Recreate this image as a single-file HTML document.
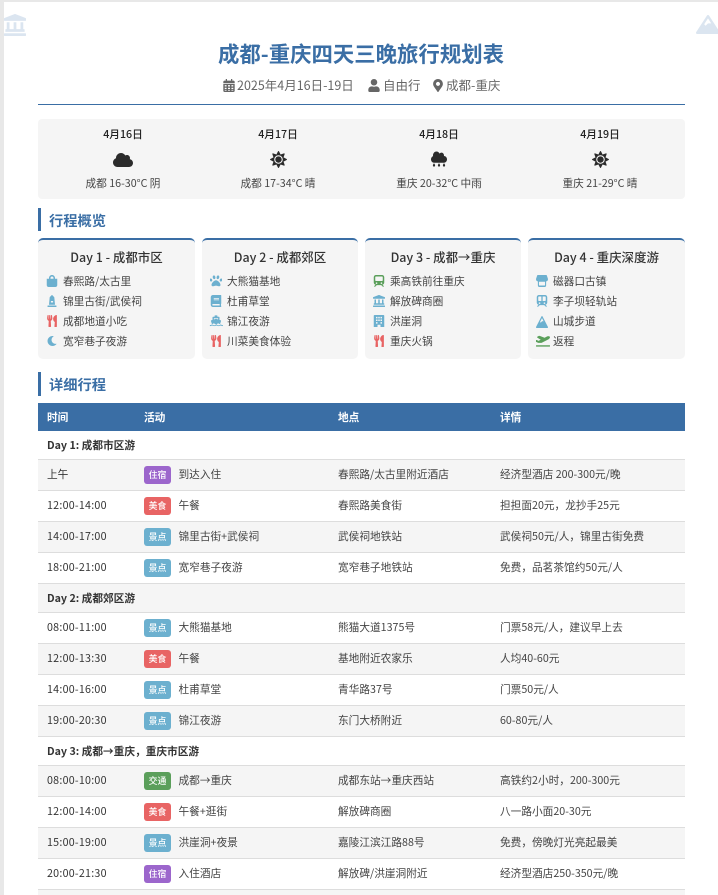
<!DOCTYPE html>
<html lang="zh"><head><meta charset="utf-8"><title>成都-重庆四天三晚旅行规划表</title>
<style>
*{box-sizing:border-box;margin:0;padding:0}
html,body{width:718px;height:895px;overflow:hidden;background:#e8e8e8}
body{font-family:"Noto Sans CJK SC","Liberation Sans",sans-serif;color:#333;position:relative}
#p{position:absolute;left:4px;top:2px;width:714px;height:893px;background:#fff;overflow:hidden}
.a{position:absolute}
svg{display:block;fill:currentColor}
h1{position:absolute;left:0;top:36px;width:714px;text-align:center;font-size:21.4px;line-height:32px;color:#3a6ea5;font-weight:700}
.meta span{position:absolute;top:74px;font-size:12.5px;line-height:18px;color:#666;white-space:nowrap}
.meta svg{position:absolute;color:#666}
.hr{left:34px;top:102px;width:647px;height:1px;background:#3a6ea5}
.wx{left:34px;top:117px;width:647px;height:80px;background:#f5f5f5;border-radius:4px}
.w{position:absolute;width:130px;text-align:center;font-size:10.68px;line-height:16px;white-space:nowrap;color:#333}
.d{top:125px;color:#222;font-weight:500}
.t{top:174px;color:#444}
.sec{left:34px;height:23px;border-left:3px solid #3a6ea5;padding-left:8px;font-size:14.24px;font-weight:700;line-height:25px;color:#3a6ea5}
.c{position:absolute;top:236px;height:121px;background:#f5f5f5;border-radius:5px;border-top:2px solid #3a6ea5}
.c h3{position:absolute;left:0;right:0;top:8px;text-align:center;font-size:12.46px;line-height:18px;font-weight:500;color:#333;white-space:nowrap}
.c div{position:absolute;left:25px;font-size:10.68px;line-height:16px;color:#444;white-space:nowrap}
.c svg{position:absolute;left:8px;width:12px;height:12px}
.b{color:#6cb0cf}.r{color:#e86464}.g{color:#5b9f5b}
.tb{left:34px;top:401px;width:647px}
.tr{position:relative;height:31px;border-bottom:1px solid #ddd;font-size:10.68px;color:#444}
.tr:nth-child(odd){background:#f5f5f5}
.tr span{position:absolute;top:7px;line-height:16px;white-space:nowrap}
.tr .s1{left:9px;color:#333;letter-spacing:.25px}.tr .s2{left:140.5px}.tr .s3{left:300px}.tr .s4{left:462px}
.tr i{position:absolute;left:106px;top:6px;width:27px;height:18px;border-radius:3px;font-style:normal;font-size:8.9px;line-height:18px;text-align:center;color:#fff;font-weight:500}
.th{height:28px;background:#3a6ea5!important;color:#fff;font-weight:700;border:0}
.th span{color:#fff!important;letter-spacing:0!important}
.dy{height:29px;font-weight:700;color:#333}
.dy span{left:9px}
.p{background:#9c66cc}.m{background:#e86464}.j{background:#6cb0cf}.x{background:#5b9f5b}
</style></head><body>
<svg width="0" height="0" style="position:absolute">
<defs>
<symbol id="bank" viewBox="0 0 512 512"><path d="M501.62 92.11L267.24 2.04a31.958 31.958 0 0 0-22.47 0L10.38 92.11A16.001 16.001 0 0 0 0 107.09V144c0 8.84 7.16 16 16 16h480c8.84 0 16-7.16 16-16v-36.91c0-6.67-4.14-12.64-10.38-14.98zM64 192v160H48c-8.84 0-16 7.16-16 16v48h448v-48c0-8.84-7.16-16-16-16h-16V192h-64v160h-96V192h-64v160h-96V192H64zm432 256H16c-8.84 0-16 7.16-16 16v32c0 8.84 7.16 16 16 16h480c8.84 0 16-7.16 16-16v-32c0-8.84-7.16-16-16-16z"/></symbol>
<symbol id="mtn" viewBox="0 0 640 512" preserveAspectRatio="none"><path d="M634.92 462.7l-288-448C341.03 5.54 330.89 0 320 0s-21.03 5.54-26.92 14.7l-288 448a32.001 32.001 0 0 0-1.17 32.64A32.004 32.004 0 0 0 32 512h576c11.71 0 22.48-6.39 28.09-16.67a31.983 31.983 0 0 0-1.17-32.63zM320 91.18L405.39 224H320l-64 64-38.06-38.06L320 91.18z"/></symbol>
<symbol id="sun" viewBox="0 0 512 512"><path d="M256 160c-52.9 0-96 43.1-96 96s43.1 96 96 96 96-43.1 96-96-43.1-96-96-96zm246.4 80.5l-94.7-47.3 33.5-100.4c4.5-13.6-8.4-26.5-21.9-21.9l-100.4 33.5-47.4-94.8c-6.4-12.8-24.6-12.8-31 0l-47.3 94.7L92.7 70.8c-13.6-4.5-26.5 8.4-21.9 21.9l33.5 100.4-94.7 47.4c-12.8 6.4-12.8 24.6 0 31l94.7 47.3-33.5 100.5c-4.5 13.6 8.4 26.5 21.9 21.9l100.4-33.5 47.3 94.7c6.4 12.8 24.6 12.8 31 0l47.3-94.7 100.4 33.5c13.6 4.5 26.5-8.4 21.9-21.9l-33.5-100.4 94.7-47.3c13-6.5 13-24.7.2-31.1zm-155.9 106c-49.9 49.9-131.1 49.9-181 0-49.9-49.9-49.9-131.1 0-181 49.9-49.9 131.1-49.9 181 0 49.9 49.9 49.9 131.1 0 181z"/></symbol>
<symbol id="cloud" viewBox="0 0 640 512"><path d="M537.6 226.6c4.1-10.7 6.4-22.4 6.4-34.6 0-53-43-96-96-96-19.7 0-38.1 6-53.3 16.2C367 64.2 315.3 32 256 32c-88.4 0-160 71.6-160 160 0 2.7.1 5.4.2 8.1C40.2 219.8 0 273.2 0 336c0 79.5 64.5 144 144 144h368c70.7 0 128-57.3 128-128 0-61.9-44-113.6-102.4-125.4z"/></symbol>
<symbol id="rain" viewBox="0 0 512 512"><path transform="scale(1 1.12)" d="M416 128c-.6 0-1.1.2-1.6.2 1.1-5.2 1.6-10.6 1.6-16.2 0-44.2-35.8-80-80-80-24.6 0-46.3 11.3-61 28.8C256.4 24.8 219.3 0 176 0 114.1 0 64 50.1 64 112c0 7.3.8 14.4 2.1 21.3C27.8 145.8 0 181.5 0 224c0 53 43 96 96 96h320c53 0 96-43 96-96s-43-96-96-96z"/><path d="M88 384c-18 30-28 44-28 62a36 36 0 0 0 72 0c0-18-10-32-28-62a9 9 0 0 0-16 0zM248 384c-18 30-28 44-28 62a36 36 0 0 0 72 0c0-18-10-32-28-62a9 9 0 0 0-16 0zM408 384c-18 30-28 44-28 62a36 36 0 0 0 72 0c0-18-10-32-28-62a9 9 0 0 0-16 0z"/></symbol>
<symbol id="user" viewBox="0 0 448 512"><path d="M224 256c70.7 0 128-57.3 128-128S294.7 0 224 0 96 57.3 96 128s57.3 128 128 128zm89.6 32h-16.7c-22.2 10.2-46.9 16-72.9 16s-50.6-5.8-72.9-16h-16.7C60.2 288 0 348.2 0 422.4V464c0 26.5 21.5 48 48 48h352c26.5 0 48-21.5 48-48v-41.6c0-74.2-60.2-134.4-134.4-134.4z"/></symbol>
<symbol id="pin" viewBox="0 0 384 512"><path d="M172.268 501.67C26.97 291.031 0 262.413 0 192 0 85.961 85.961 0 192 0s192 85.961 192 192c0 70.413-26.97 99.031-172.268 309.67-9.535 13.774-29.93 13.773-39.464 0zM192 272c44.183 0 80-35.817 80-80s-35.817-80-80-80-80 35.817-80 80 35.817 80 80 80z"/></symbol>
<symbol id="cal" viewBox="0 0 448 512"><path fill-rule="evenodd" d="M96 0h48v64h160V0h48v64h48c26 0 48 22 48 48v48H0v-48c0-26 22-48 48-48h48zM0 192h448v272c0 26-22 48-48 48H48c-26 0-48-22-48-48zM56 240v56h72v-56zm128 0v56h80v-56zm136 0v56h72v-56zM56 344v56h72v-56zm128 0v56h80v-56zm136 0v56h72v-56zM56 440v24h72v-24zm128 0v24h80v-24zm136 0v24h72v-24z"/></symbol>
<symbol id="bag" viewBox="0 0 448 512"><path d="M352 160v-32C352 57.42 294.579 0 224 0 153.42 0 96 57.42 96 128v32H0v272c0 44.183 35.817 80 80 80h288c44.183 0 80-35.817 80-80V160h-96zm-192-32c0-35.29 28.71-64 64-64s64 28.71 64 64v32H160v-32z"/></symbol>
<symbol id="mon" viewBox="0 0 384 512"><path d="M368 448H16c-8.8 0-16 7.2-16 16v32c0 8.8 7.2 16 16 16h352c8.8 0 16-7.2 16-16v-32c0-8.8-7.2-16-16-16zm-78.1-347.6c-.4-4.5-2.6-8.6-5.7-11.9L203.3 4.7c-6.2-6.2-16.4-6.2-22.6 0L99.8 84.5c-3.1 3.3-5.3 7.4-5.7 11.9L64 416h256L289.9 96.4zM240 307.2c0 6.4-6.4 12.8-12.8 12.8h-70.4c-6.4 0-12.8-6.4-12.8-12.8v-38.4c0-6.4 6.4-12.8 12.8-12.8h70.4c6.4 0 12.8 6.4 12.8 12.8v38.4z"/></symbol>
<symbol id="ut" viewBox="0 0 416 512"><path d="M207.9 15.2c.8 4.7 16.1 94.5 16.1 128.8 0 52.3-27.8 89.6-68.9 104.6L168 486.7c.7 13.7-10.2 25.3-24 25.3H80c-13.7 0-24.7-11.5-24-25.3l12.9-238.1C27.7 233.6 0 196.2 0 144 0 109.6 15.3 19.9 16.1 15.2 19.3-5.1 61.4-5.4 64 16.3v141.2c1.3 3.4 15.1 3.2 16 0 1.4-25.3 7.9-139.2 8-141.8 3.3-20.8 44.7-20.8 47.9 0 .2 2.7 6.6 116.5 8 141.8.9 3.2 14.8 3.4 16 0V16.3c2.6-21.6 44.8-21.4 48-1.1zm119.2 285.7l-15 185.1c-1.2 14 9.9 26 23.9 26h56c13.3 0 24-10.7 24-24V24c0-13.2-10.7-24-24-24-82.5 0-221.4 178.5-64.9 300.9z"/></symbol>
<symbol id="moon" viewBox="0 0 512 512"><path d="M283.211 512c78.962 0 151.079-35.925 198.857-94.792 7.068-8.708-.639-21.43-11.562-19.35-124.203 23.654-238.262-71.576-238.262-196.954 0-72.222 38.662-138.635 101.498-174.394 9.686-5.512 7.25-20.197-3.756-22.23A258.156 258.156 0 0 0 283.211 0c-141.309 0-256 114.511-256 256 0 141.309 114.511 256 256 256z"/></symbol>
<symbol id="paw" viewBox="0 0 512 512"><path d="M256 224c-79 0-192 122-192 200 0 36 27 56 72 56 49 0 81-25 120-25s72 25 120 25c45 0 72-20 72-56 0-78-113-200-192-200zM94 200c-10-35-42-58-71-51s-44 42-34 77 42 58 71 51 44-42 34-77zM193 176c31-8 46-50 35-93S185 12 154 20s-46 50-35 93 43 71 74 63zM489 149c-29-7-61 16-71 51s5 70 34 77 61-16 71-51-5-70-34-77zM319 176c31 8 63-20 74-63s-4-85-35-93-63 20-74 63 4 85 35 93z"/></symbol>
<symbol id="book" viewBox="0 0 448 512"><path d="M448 360V24c0-13-11-24-24-24H96C43 0 0 43 0 96v320c0 53 43 96 96 96h328c13 0 24-11 24-24v-16c0-8-4-14-9-19-4-15-4-58 0-72 6-5 9-13 9-21zM128 134c0-3 3-6 6-6h212c3 0 6 3 6 6v20c0 3-3 6-6 6H134c-3 0-6-3-6-6zm0 64c0-3 3-6 6-6h212c3 0 6 3 6 6v20c0 3-3 6-6 6H134c-3 0-6-3-6-6zm253 250H96c-18 0-32-14-32-32s14-32 32-32h285c-2 17-2 47 0 64z"/></symbol>
<symbol id="ship" viewBox="0 0 640 512"><path fill-rule="evenodd" d="M280 0h80c13 0 24 11 24 24v40h64c18 0 32 14 32 32v110l50 16c17 5 26 24 20 41l-46 137c-24-4-47-12-64-28-12-11-32-11-44 0-24 21-54 36-76 36s-52-15-76-36c-12-11-32-11-44 0-17 16-40 24-64 28L90 263c-6-17 3-36 20-41l50-16V96c0-18 14-32 32-32h64V24c0-13 11-24 24-24zM224 128v57l96-31 96 31v-57zM60 440c22 0 45-7 62-20 11-8 27-8 38 0 26 19 52 32 80 32s54-13 80-32c11-8 27-8 38 0 26 19 52 32 80 32s54-13 80-32c11-8 27-8 38 0 17 13 40 20 62 20 13 0 22 9 22 22s-9 26-22 26c-29 0-58-9-80-24-29 19-62 24-100 24s-71-9-100-24c-29 19-62 24-100 24s-71-9-100-24c-22 15-51 24-80 24-13 0-22-13-22-26s9-22 22-22z"/></symbol>
<symbol id="train" viewBox="0 0 448 512"><path fill-rule="evenodd" d="M96 0h256c53 0 96 43 96 96v224c0 48-32 85-78 94l62 62c8 8 2 20-8 20h-40l-64-64H128l-64 64H24c-10 0-16-12-8-20l62-62C32 405 0 368 0 320V96C0 43 43 0 96 0zM64 96v128c0 18 14 32 32 32h256c18 0 32-14 32-32V96c0-18-14-32-32-32H96c-18 0-32 14-32 32zm56 216a36 36 0 1 0 0 72 36 36 0 0 0 0-72zm208 0a36 36 0 1 0 0 72 36 36 0 0 0 0-72z"/></symbol>
<symbol id="sub" viewBox="0 0 448 512"><path fill-rule="evenodd" d="M96 0h256c53 0 96 43 96 96v224c0 48-32 85-78 94l62 62c8 8 2 20-8 20h-40l-64-64H128l-64 64H24c-10 0-16-12-8-20l62-62C32 405 0 368 0 320V96C0 43 43 0 96 0zM64 96v128c0 18 14 32 32 32h100V64H96c-18 0-32 14-32 32zm188-32v192h100c18 0 32-14 32-32V96c0-18-14-32-32-32zM120 312a36 36 0 1 0 0 72 36 36 0 0 0 0-72zm208 0a36 36 0 1 0 0 72 36 36 0 0 0 0-72z"/></symbol>
<symbol id="bld" viewBox="0 0 448 512"><path fill-rule="evenodd" d="M36 0h376c20 0 36 16 36 36v476H288v-96H160v96H0V36C0 16 16 0 36 0zM96 80v64h64V80zm96 0v64h64V80zm96 0v64h64V80zM96 192v64h64v-64zm96 0v64h64v-64zm96 0v64h64v-64zM96 304v64h64v-64zm192 0v64h64v-64z"/></symbol>
<symbol id="store" viewBox="0 0 616 512" preserveAspectRatio="none"><path fill-rule="evenodd" d="M90 0h436c12 0 23 7 28 18l54 130c25 60-18 125-82 125-2 0-4 0-6-1v168c0 40-32 72-72 72H168c-40 0-72-32-72-72V272c-2 1-4 1-6 1-64 0-107-65-82-125L62 18C67 7 78 0 90 0zm62 288v144c0 9 7 16 16 16h280c9 0 16-7 16-16V288z"/></symbol>
<symbol id="plane" viewBox="0 0 640 512"><path d="M624 448H16c-9 0-16 7-16 16v32c0 9 7 16 16 16h608c9 0 16-7 16-16v-32c0-9-7-16-16-16zM80 333c6 7 15 11 24 11l131-1c10 0 20-2 29-7l292-148c27-14 51-33 67-59 18-29 20-50 13-65-7-14-25-26-59-28-30-2-60 6-87 20l-99 50-220-82c-13-6-27-6-39 0l-66 34c-16 8-20 29-7 41l157 98-104 53-73-37c-10-5-22-5-32 0l-40 21c-15 8-19 28-8 40z"/></symbol>
</defs></svg>
<div id="p">
<svg class="a" style="left:0;top:12px;width:22px;height:22px;color:#dbe5f0"><use href="#bank"/></svg>
<svg class="a" style="left:692px;top:13px;width:24px;height:19px;color:#dbe5f0"><use href="#mtn"/></svg>
<h1>成都-重庆四天三晚旅行规划表</h1>
<div class="meta">
<svg style="left:219px;top:77px;width:12px;height:13px"><use href="#cal"/></svg><span style="left:233px">2025年4月16日-19日</span>
<svg style="left:364px;top:77px;width:12px;height:13px"><use href="#user"/></svg><span style="left:379px">自由行</span>
<svg style="left:429px;top:77px;width:10px;height:13px"><use href="#pin"/></svg><span style="left:442px">成都-重庆</span>
</div>
<div class="a hr"></div>
<div class="a wx"></div>
<div class="w d" style="left:54px">4月16日</div><div class="w d" style="left:209px">4月17日</div><div class="w d" style="left:370px">4月18日</div><div class="w d" style="left:531px">4月19日</div>
<svg class="a" style="left:109px;top:150px;width:20px;height:16px;color:#2b2b2b"><use href="#cloud"/></svg>
<svg class="a" style="left:266px;top:149px;width:17px;height:17px;color:#2b2b2b"><use href="#sun"/></svg>
<svg class="a" style="left:427px;top:149px;width:16px;height:17px;color:#2b2b2b"><use href="#rain"/></svg>
<svg class="a" style="left:588px;top:149px;width:17px;height:17px;color:#2b2b2b"><use href="#sun"/></svg>
<div class="w t" style="left:54px">成都 16-30°C 阴</div><div class="w t" style="left:209px">成都 17-34°C 晴</div><div class="w t" style="left:370px">重庆 20-32°C 中雨</div><div class="w t" style="left:531px">重庆 21-29°C 晴</div>
<div class="a sec" style="top:206px">行程概览</div>
<div class="c" style="left:34px;width:157px"><h3>Day 1 - 成都市区</h3>
<svg class="b" style="top:35px"><use href="#bag"/></svg><div style="top:34px">春熙路/太古里</div>
<svg class="b" style="top:55px"><use href="#mon"/></svg><div style="top:54px">锦里古街/武侯祠</div>
<svg class="r" style="top:75px"><use href="#ut"/></svg><div style="top:74px">成都地道小吃</div>
<svg class="b" style="top:95px;left:9px;width:10px"><use href="#moon"/></svg><div style="top:94px">宽窄巷子夜游</div></div>
<div class="c" style="left:198px;width:156px"><h3>Day 2 - 成都郊区</h3>
<svg class="b" style="top:35px"><use href="#paw"/></svg><div style="top:34px">大熊猫基地</div>
<svg class="b" style="top:55px"><use href="#book"/></svg><div style="top:54px">杜甫草堂</div>
<svg class="b" style="top:75px;left:7px;width:14px"><use href="#ship"/></svg><div style="top:74px">锦江夜游</div>
<svg class="r" style="top:95px"><use href="#ut"/></svg><div style="top:94px">川菜美食体验</div></div>
<div class="c" style="left:361px;width:156px"><h3>Day 3 - 成都→重庆</h3>
<svg class="g" style="top:35px"><use href="#train"/></svg><div style="top:34px">乘高铁前往重庆</div>
<svg class="b" style="top:55px"><use href="#bank"/></svg><div style="top:54px">解放碑商圈</div>
<svg class="b" style="top:75px"><use href="#bld"/></svg><div style="top:74px">洪崖洞</div>
<svg class="r" style="top:95px"><use href="#ut"/></svg><div style="top:94px">重庆火锅</div></div>
<div class="c" style="left:524px;width:157px"><h3>Day 4 - 重庆深度游</h3>
<svg class="b" style="top:35px"><use href="#store"/></svg><div style="top:34px">磁器口古镇</div>
<svg class="b" style="top:55px"><use href="#sub"/></svg><div style="top:54px">李子坝轻轨站</div>
<svg class="b" style="top:76px"><use href="#mtn"/></svg><div style="top:74px">山城步道</div>
<svg class="g" style="top:95px;width:14px"><use href="#plane"/></svg><div style="top:94px">返程</div></div>
<div class="a sec" style="top:370px;height:24px;line-height:26px">详细行程</div>
<div class="a tb">
<div class="tr th"><span class="s1">时间</span><span class="s2" style="left:106px">活动</span><span class="s3">地点</span><span class="s4">详情</span></div>
<div class="tr dy"><span>Day 1: 成都市区游</span></div>
<div class="tr"><span class="s1" style="letter-spacing:0">上午</span><i class="p">住宿</i><span class="s2">到达入住</span><span class="s3">春熙路/太古里附近酒店</span><span class="s4">经济型酒店 200-300元/晚</span></div>
<div class="tr"><span class="s1">12:00-14:00</span><i class="m">美食</i><span class="s2">午餐</span><span class="s3">春熙路美食街</span><span class="s4">担担面20元，龙抄手25元</span></div>
<div class="tr"><span class="s1">14:00-17:00</span><i class="j">景点</i><span class="s2">锦里古街+武侯祠</span><span class="s3">武侯祠地铁站</span><span class="s4">武侯祠50元/人，锦里古街免费</span></div>
<div class="tr"><span class="s1">18:00-21:00</span><i class="j">景点</i><span class="s2">宽窄巷子夜游</span><span class="s3">宽窄巷子地铁站</span><span class="s4">免费，品茗茶馆约50元/人</span></div>
<div class="tr dy"><span>Day 2: 成都郊区游</span></div>
<div class="tr"><span class="s1">08:00-11:00</span><i class="j">景点</i><span class="s2">大熊猫基地</span><span class="s3">熊猫大道1375号</span><span class="s4">门票58元/人，建议早上去</span></div>
<div class="tr"><span class="s1">12:00-13:30</span><i class="m">美食</i><span class="s2">午餐</span><span class="s3">基地附近农家乐</span><span class="s4">人均40-60元</span></div>
<div class="tr"><span class="s1">14:00-16:00</span><i class="j">景点</i><span class="s2">杜甫草堂</span><span class="s3">青华路37号</span><span class="s4">门票50元/人</span></div>
<div class="tr"><span class="s1">19:00-20:30</span><i class="j">景点</i><span class="s2">锦江夜游</span><span class="s3">东门大桥附近</span><span class="s4">60-80元/人</span></div>
<div class="tr dy"><span>Day 3: 成都→重庆，重庆市区游</span></div>
<div class="tr"><span class="s1">08:00-10:00</span><i class="x">交通</i><span class="s2">成都→重庆</span><span class="s3">成都东站→重庆西站</span><span class="s4">高铁约2小时，200-300元</span></div>
<div class="tr"><span class="s1">12:00-14:00</span><i class="m">美食</i><span class="s2">午餐+逛街</span><span class="s3">解放碑商圈</span><span class="s4">八一路小面20-30元</span></div>
<div class="tr"><span class="s1">15:00-19:00</span><i class="j">景点</i><span class="s2">洪崖洞+夜景</span><span class="s3">嘉陵江滨江路88号</span><span class="s4">免费，傍晚灯光亮起最美</span></div>
<div class="tr"><span class="s1">20:00-21:30</span><i class="p">住宿</i><span class="s2">入住酒店</span><span class="s3">解放碑/洪崖洞附近</span><span class="s4">经济型酒店250-350元/晚</span></div>
<div class="tr dy"></div>
</div>
</div>
</body></html>
